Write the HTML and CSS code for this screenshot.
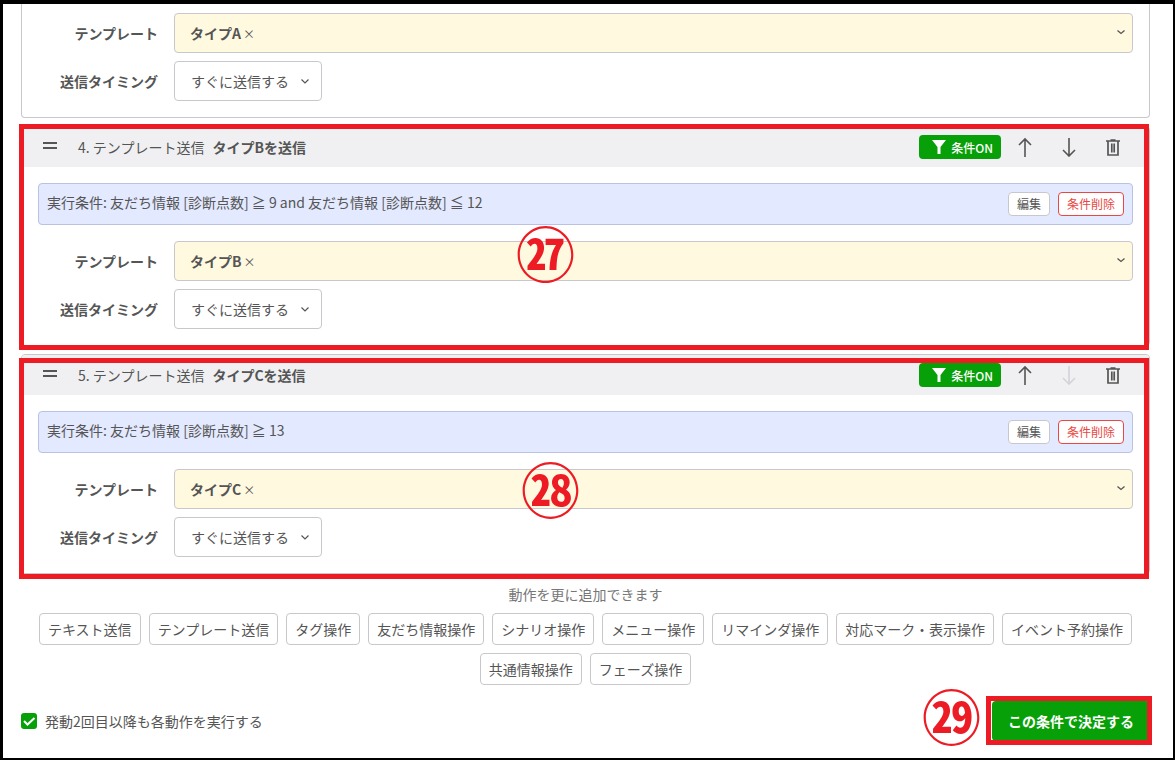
FILE: index.html
```
<!DOCTYPE html>
<html lang="ja">
<head>
    <meta charset="UTF-8">
    <title>アクション設定</title>
    <link rel="stylesheet" href="styles.css">
</head>
<body>
    <svg class="sprite" aria-hidden="true">
        <symbol id="icon-filter" viewBox="0 0 14 14">
            <path d="M0 0h14L8.500 7v7H5.500V7z" fill="currentColor"/>
        </symbol>
        <symbol id="icon-up" viewBox="0 0 16 20">
            <path d="M8 20V2M2 8l6-6 6 6" fill="none" stroke="currentColor" stroke-width="1.6"/>
        </symbol>
        <symbol id="icon-down" viewBox="0 0 16 20">
            <path d="M8 1v18M2 13l6 6 6-6" fill="none" stroke="currentColor" stroke-width="1.6"/>
        </symbol>
        <symbol id="icon-trash" viewBox="0 0 16 20">
            <path d="M1 4h14M5.500 3h5M3 4v14h10V4M6.800 6.500v9M9.200 6.500v9" fill="none" stroke="currentColor" stroke-width="1.7"/>
        </symbol>
        <symbol id="icon-handle" viewBox="0 0 14 8">
            <path d="M0 1h14M0 6h14" fill="none" stroke="currentColor" stroke-width="1.8"/>
        </symbol>
        <symbol id="icon-chevron" viewBox="0 0 10 10">
            <path d="M1.500 2.500L5 5.500l3.500-3" fill="none" stroke="currentColor" stroke-width="1.3"/>
        </symbol>
    </svg>

    <main class="page">
        <section class="card card-cut">
            <div class="card-body">
                <div class="field">
                    <span class="field-label" id="template3">テンプレート</span>
                    <div class="picker" role="group" aria-labelledby="template3">
                        <strong>タイプA</strong><button type="button" class="remove" aria-label="タイプAを外す">×</button>
                        <svg class="chevron"><use href="#icon-chevron"/></svg>
                    </div>
                </div>
                <div class="field">
                    <label class="field-label" for="timing3">送信タイミング</label>
                    <select class="timing" id="timing3"><option>すぐに送信する</option></select>
                </div>
            </div>
        </section>

        <section class="card">
            <header class="card-header">
                <svg class="handle"><use href="#icon-handle"/></svg>
                <span>4. テンプレート送信</span>
                <strong class="card-title">タイプBを送信</strong>
                <button type="button" class="condition-on"><svg class="filter"><use href="#icon-filter"/></svg>条件ON</button>
                <button type="button" class="icon-button" aria-label="上へ"><svg><use href="#icon-up"/></svg></button>
                <button type="button" class="icon-button" aria-label="下へ"><svg><use href="#icon-down"/></svg></button>
                <button type="button" class="icon-button" aria-label="削除"><svg><use href="#icon-trash"/></svg></button>
            </header>
            <div class="card-body">
                <div class="condition">
                    <span class="condition-text">実行条件: 友だち情報 [診断点数] ≧ 9 and 友だち情報 [診断点数] ≦ 12</span>
                    <button type="button" class="small-button">編集</button>
                    <button type="button" class="small-button danger">条件削除</button>
                </div>
                <div class="field">
                    <span class="field-label" id="template4">テンプレート</span>
                    <div class="picker" role="group" aria-labelledby="template4">
                        <strong>タイプB</strong><button type="button" class="remove" aria-label="タイプBを外す">×</button>
                        <svg class="chevron"><use href="#icon-chevron"/></svg>
                    </div>
                </div>
                <div class="field">
                    <label class="field-label" for="timing4">送信タイミング</label>
                    <select class="timing" id="timing4"><option>すぐに送信する</option></select>
                </div>
            </div>
            <div class="mark mark-27"></div>
            <span class="step step-27">㉗</span>
        </section>

        <section class="card">
            <header class="card-header">
                <svg class="handle"><use href="#icon-handle"/></svg>
                <span>5. テンプレート送信</span>
                <strong class="card-title">タイプCを送信</strong>
                <button type="button" class="condition-on"><svg class="filter"><use href="#icon-filter"/></svg>条件ON</button>
                <button type="button" class="icon-button" aria-label="上へ"><svg><use href="#icon-up"/></svg></button>
                <button type="button" class="icon-button" aria-label="下へ" disabled><svg><use href="#icon-down"/></svg></button>
                <button type="button" class="icon-button" aria-label="削除"><svg><use href="#icon-trash"/></svg></button>
            </header>
            <div class="card-body">
                <div class="condition">
                    <span class="condition-text">実行条件: 友だち情報 [診断点数] ≧ 13</span>
                    <button type="button" class="small-button">編集</button>
                    <button type="button" class="small-button danger">条件削除</button>
                </div>
                <div class="field">
                    <span class="field-label" id="template5">テンプレート</span>
                    <div class="picker" role="group" aria-labelledby="template5">
                        <strong>タイプC</strong><button type="button" class="remove" aria-label="タイプCを外す">×</button>
                        <svg class="chevron"><use href="#icon-chevron"/></svg>
                    </div>
                </div>
                <div class="field">
                    <label class="field-label" for="timing5">送信タイミング</label>
                    <select class="timing" id="timing5"><option>すぐに送信する</option></select>
                </div>
            </div>
            <div class="mark mark-28"></div>
            <span class="step step-28">㉘</span>
        </section>

        <p class="add-text">動作を更に追加できます</p>
        <div class="add-buttons">
            <button type="button">テキスト送信</button>
            <button type="button">テンプレート送信</button>
            <button type="button">タグ操作</button>
            <button type="button">友だち情報操作</button>
            <button type="button">シナリオ操作</button>
            <button type="button">メニュー操作</button>
            <button type="button">リマインダ操作</button>
            <button type="button">対応マーク・表示操作</button>
            <button type="button">イベント予約操作</button>
            <button type="button">共通情報操作</button>
            <button type="button">フェーズ操作</button>
        </div>

        <footer class="footer">
            <label class="repeat"><input type="checkbox" checked>発動2回目以降も各動作を実行する</label>
            <div class="submit-wrap">
                <button type="submit" class="submit">この条件で決定する</button>
                <div class="mark mark-29"></div>
                <span class="step step-29">㉙</span>
            </div>
        </footer>
    </main>
</body>
</html>
```
FILE: styles.css
```
* {
    box-sizing: border-box;
}

body {
    margin: 0;
    font-family: "Noto Sans CJK JP", sans-serif;
    font-size: 14px;
    line-height: 21px;
    color: #555;
    background-color: white;
}

button,
select {
    font: inherit;
    color: inherit;
    cursor: pointer;
}

.sprite {
    display: none;
}

.page {
    min-height: 100vh;
    padding: 0 23px 16px 18px;
    border: solid black;
    border-width: 4px 2px 2px 3px;
}

.card {
    position: relative;
    margin-bottom: 8px;
    border: 1px solid #c8c8cc;
    border-radius: 4px;
}

.card-cut {
    border-top: none;
    border-radius: 0 0 4px 4px;
}

.card-cut .card-body {
    padding-top: 9px;
}

.card-header {
    display: flex;
    align-items: center;
    height: 40px;
    padding: 0 14px 0 21px;
    background-color: #f0f0f2;
    border-radius: 3px 3px 0 0;
}

.handle {
    width: 14px;
    height: 8px;
    margin: 0 21px 2px 0;
}

.card-title {
    flex: 1;
    margin-left: 8px;
}

.condition-on {
    display: flex;
    align-items: center;
    gap: 5px;
    height: 24px;
    margin-right: 2px;
    padding: 0 8px 0 13px;
    border: none;
    border-radius: 4px;
    background-color: #08a008;
    color: white;
    font-size: 12px;
    font-weight: 500;
}

.filter {
    width: 14px;
    height: 14px;
}

.icon-button {
    display: flex;
    justify-content: center;
    width: 44px;
    padding: 0;
    border: none;
    background: none;
}

.icon-button svg {
    width: 16px;
    height: 20px;
}

.icon-button:disabled {
    color: #d4d4d8;
    cursor: default;
}

.card-body {
    padding: 16px;
}

.condition {
    display: flex;
    align-items: center;
    gap: 8px;
    height: 42px;
    margin-bottom: 16px;
    padding: 0 8px;
    border: 1px solid #b9c2e4;
    border-radius: 4px;
    background-color: #e3e9ff;
}

.condition-text {
    flex: 1;
    padding-bottom: 3px;
}

.small-button {
    height: 24px;
    padding: 0 8px;
    border: 1px solid #c8c8cc;
    border-radius: 4px;
    background-color: white;
    font-size: 12px;
    line-height: 18px;
}

.small-button.danger {
    border-color: #e8483f;
    color: #e8483f;
}

.field {
    display: grid;
    grid-template-columns: 120px 1fr;
    align-items: center;
    gap: 16px;
}

.field + .field {
    margin-top: 8px;
}

.field-label {
    font-weight: bold;
    text-align: right;
}

.picker {
    display: flex;
    align-items: center;
    height: 40px;
    padding: 0 6px 0 15px;
    border: 1px solid #c8c8cc;
    border-radius: 4px;
    background-color: #fff9e0;
}

.remove {
    margin-left: 2px;
    padding: 0;
    border: none;
    background: none;
    font-size: 12px;
}

.chevron {
    width: 10px;
    height: 10px;
    margin-left: auto;
}

.timing {
    appearance: none;
    justify-self: start;
    height: 40px;
    padding: 0 32px 0 16px;
    border: 1px solid #c8c8cc;
    border-radius: 4px;
    background: white url("data:image/svg+xml,%3Csvg xmlns='http://www.w3.org/2000/svg' viewBox='0 0 10 10'%3E%3Cpath d='M1.500 3.500L5 7l3.500-3.500' fill='none' stroke='%23555' stroke-width='1.2'/%3E%3C/svg%3E") no-repeat right 11px center / 10px 10px;
}

.add-text {
    margin: 10px 0 8px;
    color: #777;
    text-align: center;
}

.add-buttons {
    display: flex;
    flex-wrap: wrap;
    justify-content: center;
    gap: 8px;
    padding: 0 16px;
}

.add-buttons button {
    height: 32px;
    padding: 0 8px;
    border: 1px solid #c8c8cc;
    border-radius: 4px;
    background-color: white;
}

.footer {
    display: flex;
    align-items: center;
    justify-content: space-between;
    margin-top: 16px;
}

.repeat {
    display: flex;
    align-items: center;
    gap: 8px;
}

.repeat input {
    appearance: none;
    width: 16px;
    height: 16px;
    margin: 0;
    border-radius: 3px;
    border: 1px solid #c8c8cc;
}

.repeat input:checked {
    border: none;
    background: #08a008 url("data:image/svg+xml,%3Csvg xmlns='http://www.w3.org/2000/svg' viewBox='0 0 16 16'%3E%3Cpath d='M3 8l3.500 3.500L13.500 5' fill='none' stroke='white' stroke-width='2'/%3E%3C/svg%3E");
}

.submit-wrap {
    position: relative;
}

.submit {
    height: 40px;
    padding: 0 16px;
    border: none;
    border-radius: 4px;
    background-color: #08a008;
    color: white;
    font-weight: bold;
}

/* Numbered steps drawn over the form */
.mark {
    position: absolute;
    border: 5px solid #ed1c24;
    pointer-events: none;
}

.mark-27 {
    top: -3px;
    right: 0;
    bottom: -5px;
    left: -3px;
}

.mark-28 {
    top: 3px;
    right: 0;
    bottom: -6px;
    left: -3px;
}

.mark-29 {
    top: -5px;
    right: -2px;
    bottom: -4px;
    left: -6px;
}

.step {
    position: absolute;
    color: #ed1c24;
    font-size: 59px;
    font-weight: bold;
    line-height: 56px;
}

.step-27 {
    top: 97px;
    left: 494px;
}

.step-28 {
    top: 105px;
    left: 499px;
}

.step-29 {
    top: -14px;
    right: 169px;
}
```
